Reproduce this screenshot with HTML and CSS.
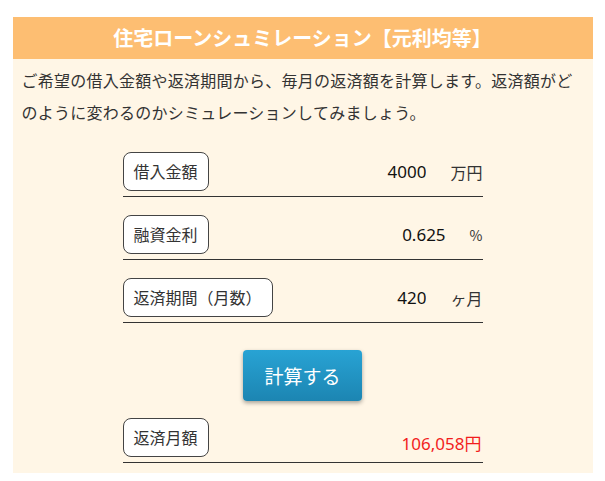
FILE: index.html
```html
<!DOCTYPE html>
<html lang="ja">
<head>
  <meta charset="UTF-8">
  <meta name="viewport" content="width=device-width, initial-scale=1.0">
  <title>住宅ローンシュミレーション</title>
  <link rel="stylesheet" href="styles.css">
</head>
<body>
  <div class="sim-container">
    <h1 class="sim-title">住宅ローンシュミレーション【元利均等】</h1>
    <p class="sim-lead">ご希望の借入金額や返済期間から、毎月の返済額を計算します。返済額がどのように変わるのかシミュレーションしてみましょう。</p>

    <!-- Input rows -->
    <form id="loanForm" class="sim-form">
      <div class="sim-row">
        <label class="sim-label" for="amount">借入金額</label>
        <input type="text" id="amount" class="sim-input" value="4000">
        <span class="sim-unit">万円</span>
      </div>

      <div class="sim-row">
        <label class="sim-label" for="rate">融資金利</label>
        <input type="text" id="rate" class="sim-input" value="0.625">
        <span class="sim-unit unit-small">%</span>
      </div>

      <div class="sim-row">
        <label class="sim-label" for="months">返済期間（月数）</label>
        <input type="text" id="months" class="sim-input" value="420">
        <span class="sim-unit">ヶ月</span>
      </div>

      <div class="button-wrap">
        <button type="submit" class="calc-button">計算する</button>
      </div>

      <div class="sim-row result-row">
        <span class="sim-label">返済月額</span>
        <span class="sim-result"><span id="result">106,058</span>円</span>
      </div>
    </form>
  </div>

  <script>
    function calcLoan(event) {
      event.preventDefault();

      const amount = parseFloat(document.getElementById("amount").value) * 10000;
      const rate = parseFloat(document.getElementById("rate").value) / 100 / 12;
      const months = parseInt(document.getElementById("months").value, 10);

      if (!amount || !months) return;

      let monthly;
      if (rate === 0) {
        monthly = amount / months;
      } else {
        monthly = amount * rate * Math.pow(1 + rate, months) / (Math.pow(1 + rate, months) - 1);
      }

      document.getElementById("result").innerText = Math.round(monthly).toLocaleString();
    }

    document.addEventListener("DOMContentLoaded", function () {
      document.getElementById("loanForm").addEventListener("submit", calcLoan);
    });
  </script>
</body>
</html>
```

FILE: styles.css
```css
body {
  margin: 0;
  background-color: #fff;
  font-family: "Noto Sans CJK JP", "Noto Sans", sans-serif;
  color: #333;
}
.sim-container {
  width: 580px;
  margin: 17px auto 0;
  padding-bottom: 10px;
  background-color: #fff6e6;
}
.sim-title {
  margin: 0;
  height: 42px;
  line-height: 42px;
  background-color: #fdbe72;
  color: #fff;
  font-size: 20px;
  font-weight: bold;
  text-align: center;
}
.sim-lead {
  margin: 5px 0 0;
  padding: 0 11px 0 9px;
  font-size: 16px;
  letter-spacing: 0.25px;
  line-height: 32px;
}
.sim-form {
  width: 360px;
  margin: 24px auto 0;
}
.sim-row {
  display: flex;
  align-items: center;
  padding-bottom: 5px;
  margin-bottom: 18px;
  border-bottom: 1px solid #333;
}
.sim-label {
  box-sizing: border-box;
  height: 39px;
  line-height: 37px;
  padding: 0 10px;
  background-color: #fff;
  border: 1px solid #444;
  border-radius: 8px;
  font-size: 16px;
  color: #333;
  white-space: nowrap;
}
.sim-input {
  flex: 1;
  min-width: 0;
  padding: 0;
  border: none;
  background: transparent;
  font-family: "Noto Sans", sans-serif;
  font-size: 17px;
  color: #111;
  text-align: right;
  outline: none;
}
.sim-unit {
  margin-left: 24px;
  font-size: 16px;
  color: #333;
}
.unit-small {
  font-size: 14px;
}
.button-wrap {
  display: flex;
  justify-content: center;
  margin-top: 27px;
}
.calc-button {
  width: 119px;
  height: 51px;
  border: none;
  border-radius: 4px;
  background: linear-gradient(#28a3d4, #1c85b2);
  box-shadow: 0 2px 4px rgba(0, 0, 0, 0.35);
  color: #fff;
  font-family: "Noto Sans CJK JP", sans-serif;
  font-size: 19px;
  cursor: pointer;
}
.calc-button:hover {
  background: linear-gradient(#2294c2, #18749c);
}
.result-row {
  align-items: flex-end;
  margin-top: 17px;
  margin-bottom: 0;
  padding-bottom: 5px;
}
.sim-result {
  flex: 1;
  text-align: right;
  padding-bottom: 2px;
  margin-right: 1px;
  font-family: "Noto Sans", "Noto Sans CJK JP", sans-serif;
  font-size: 17px;
  color: #f21d1d;
}
```
